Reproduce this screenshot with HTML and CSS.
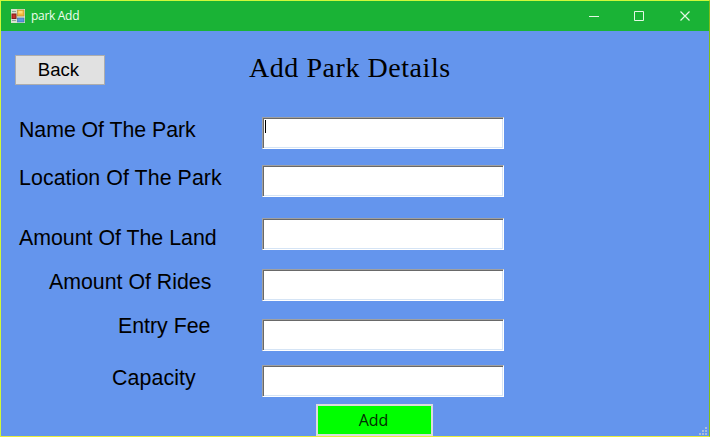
FILE: index.html
```html
<!DOCTYPE html>
<html lang="en">
<head>
<meta charset="utf-8">
<title>park Add</title>
<link rel="stylesheet" href="styles.css">
</head>
<body>
<div class="window">
  <header class="titlebar">
    <svg class="app-icon" width="14" height="14" viewBox="0 0 14 14">
      <rect width="14" height="14" fill="#d9e3cf"/>
      <rect x="6.5" y="1" width="6.5" height="6" fill="#f4b93c" stroke="#b8862b" stroke-width=".6"/>
      <rect x="7.5" y="2" width="4" height="2.5" fill="#ffdc74"/>
      <rect x="1" y="5" width="4" height="4.5" fill="#c62f29" stroke="#80201d"/>
      <rect x="6.5" y="9" width="6.5" height="4" fill="#5c96e0" stroke="#376cac" stroke-width=".6"/>
      <path d="M1 2.5h4M1 11.5h4" stroke="#8fa397"/>
    </svg>
    <span class="caption">park Add</span>
    <svg class="controls" width="104" height="14" viewBox="0 0 104 14" fill="none" stroke="#e4f8e5">
      <path d="M1 7.500h10M46.500 2.500h9v9h-9z"/>
      <path d="M92.500 2.500l9 9M101.500 2.500l-9 9" stroke-width="1.2"/>
    </svg>
  </header>
  <main>
    <div class="heading">
      <button class="back">Back</button>
      <h1>Add Park Details</h1>
    </div>
    <form>
      <label class="row name"><span>Name Of The Park</span><i class="field"><b class="caret"></b></i></label>
      <label class="row location"><span>Location Of The Park</span><i class="field"></i></label>
      <label class="row land"><span>Amount Of The Land</span><i class="field"></i></label>
      <label class="row rides"><span>Amount Of Rides</span><i class="field"></i></label>
      <label class="row fee"><span>Entry Fee</span><i class="field"></i></label>
      <label class="row capacity"><span>Capacity</span><i class="field"></i></label>
      <button type="button" class="add">Add</button>
    </form>
  </main>
  <svg class="grip" width="9" height="9" viewBox="0 0 9 9" fill="#a9bddb"><path d="M6 0h2v2h-2zM3 3h2v2h-2zM6 3h2v2h-2zM0 6h2v2h-2zM3 6h2v2h-2zM6 6h2v2h-2z"/></svg>
</div>
</body>
</html>
```
FILE: styles.css
```css
* { box-sizing: border-box; }
body { margin: 0; overflow: hidden; }
.window {
  position: relative;
  width: 710px;
  height: 437px;
  overflow: hidden;
  background: #6495ed;
  border: 1px solid #d0f83a;
  border-right-color: #80bd18;
  border-bottom-color: #e9ee3c;
  font-family: "Liberation Sans", Arial, sans-serif;
  color: #000;
}
.titlebar {
  height: 30px;
  display: flex;
  align-items: center;
  padding: 0 17px 0 10px;
  background: #1ab336;
}
.caption {
  margin-left: 6px;
  font: 12px/16px "Open Sans", sans-serif;
  letter-spacing: -0.3px;
  color: #effff0;
}
.controls { margin-left: auto; }
.heading {
  display: flex;
  align-items: flex-start;
  height: 86px;
  padding: 24px 0 0 14px;
}
button { padding: 0; margin: 0; color: #000; }
.back {
  width: 90px;
  height: 30px;
  padding-right: 3px;
  background: #e1e1e1;
  border: 1px solid #adadad;
  font: 18.6px/28px "Liberation Sans", sans-serif;
}
h1 {
  margin: -5px 0 0 144px;
  font: 28px/36px "Palatino Linotype", Palatino, "Liberation Serif", serif;
  letter-spacing: 0.55px;
  white-space: nowrap;
}
form { display: flex; flex-direction: column; }
.row {
  display: flex;
  height: 32px;
  font-size: 21.33px;
  line-height: 24px;
  white-space: nowrap;
}
.row span { width: 261px; padding-left: 18px; flex: none; }
.field {
  width: 242px;
  height: 32px;
  padding: 1px;
  background: #fff;
  border: 1px solid;
  border-color: #a0a0a0 #fff #fff #a0a0a0;
  box-shadow: inset 1px 1px #696969, inset -1px -1px #d5e4f5;
}
.caret { display: block; width: 1px; height: 13px; margin: 1px; background: #000; }
.name span, .location span { padding-top: 1px; }
.name { letter-spacing: -0.05px; }
.location { margin-top: 16px; letter-spacing: 0.08px; }
.land { margin-top: 21px; }
.land span { padding-top: 8px; }
.rides { margin-top: 19px; }
.rides span { padding: 1px 0 0 48px; }
.fee { margin-top: 18px; }
.fee span { padding-left: 117px; margin-top: -5px; }
.capacity { margin-top: 14px; }
.capacity span { padding: 1px 0 0 111px; letter-spacing: 0.1px; }
.add {
  width: 117px;
  height: 32px;
  margin: 7px 0 0 315px;
  padding-right: 2px;
  background: #0f0;
  border: 2px solid #dcdcdc;
  font: 16px/28px "Open Sans", sans-serif;
  color: #032b03;
}
.grip { position: absolute; right: 1px; bottom: 0; }
```
